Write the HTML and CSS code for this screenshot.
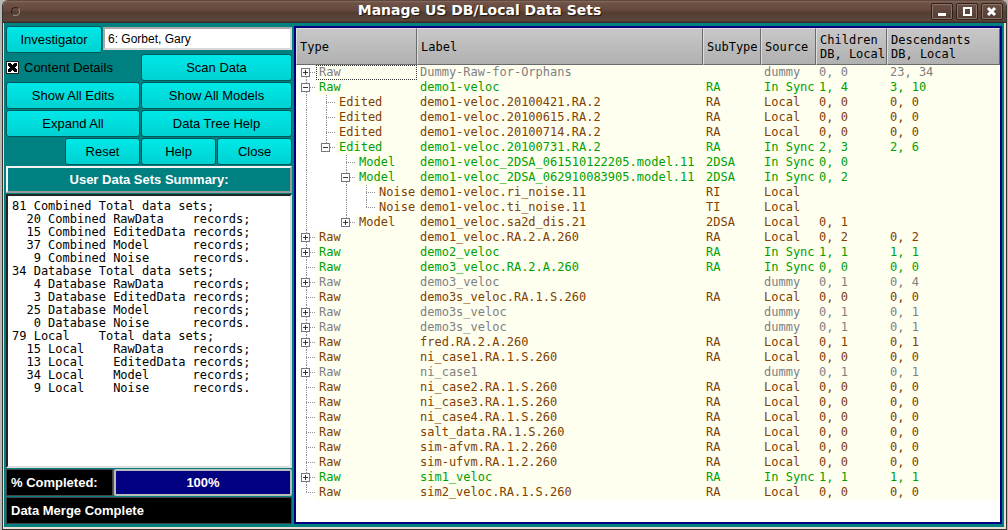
FILE: index.html
```html
<!DOCTYPE html>
<html lang="en">
<head>
<meta charset="utf-8">
<title>Manage US DB/Local Data Sets</title>
<link rel="stylesheet" href="styles.css">
</head>
<body>
<div class="window">
  <header class="titlebar">
    <span class="dot"></span>
    <h1>Manage US DB/Local Data Sets</h1>
    <div class="winbuttons">
      <button type="button" aria-label="Minimize"><svg width="20" height="15" viewBox="0 0 20 15"><path d="M6 9h8v3H6z" fill="#fff"/></svg></button>
      <button type="button" aria-label="Maximize"><svg width="20" height="15" viewBox="0 0 20 15"><path d="M7 4h7v7H7z" fill="none" stroke="#fff" stroke-width="2"/></svg></button>
      <button type="button" aria-label="Close"><svg width="20" height="15" viewBox="0 0 20 15"><path d="M6 4l7 7M13 4l-7 7" fill="none" stroke="#fff" stroke-width="3"/></svg></button>
    </div>
  </header>
  <main class="content">
    <section class="side">
      <div class="row">
        <button type="button" class="btn inv">Investigator</button>
        <input class="field" type="text" value="6: Gorbet, Gary" aria-label="Investigator">
      </div>
      <div class="grid">
        <label class="check"><input type="checkbox" checked>Content Details</label>
        <button type="button" class="btn">Scan Data</button>
        <button type="button" class="btn">Show All Edits</button>
        <button type="button" class="btn">Show All Models</button>
        <button type="button" class="btn">Expand All</button>
        <button type="button" class="btn">Data Tree Help</button>
      </div>
      <div class="row end">
        <button type="button" class="btn">Reset</button>
        <button type="button" class="btn">Help</button>
        <button type="button" class="btn">Close</button>
      </div>
      <h2 class="banner">User Data Sets Summary:</h2>
      <pre class="summary">81 Combined Total data sets;
  20 Combined RawData    records;
  15 Combined EditedData records;
  37 Combined Model      records;
   9 Combined Noise      records.
34 Database Total data sets;
   4 Database RawData    records;
   3 Database EditedData records;
  25 Database Model      records;
   0 Database Noise      records.
79 Local    Total data sets;
  15 Local    RawData    records;
  13 Local    EditedData records;
  34 Local    Model      records;
   9 Local    Noise      records.</pre>
      <div class="row">
        <span class="status pct">% Completed:</span>
        <div class="progress">100%</div>
      </div>
      <div class="status">Data Merge Complete</div>
    </section>
    <section class="tree">
      <table>
        <colgroup><col class="c1"><col class="c2"><col class="c3"><col class="c4"><col class="c5"><col></colgroup>
        <thead><tr><th>Type</th><th>Label</th><th>SubType</th><th>Source</th><th>Children<br>DB, Local</th><th>Descendants<br>DB, Local</th></tr></thead>
        <tbody>
<tr class="gray"><td><div class="node"><i class="tee first"><button type="button" class="plus" aria-label="Expand"></button></i><span class="focus">Raw</span></div></td><td>Dummy-Raw-for-Orphans</td><td></td><td>dummy</td><td>0, 0</td><td>23, 34</td></tr>
<tr class="green"><td><div class="node"><i class="tee"><button type="button" class="minus" aria-label="Collapse"></button></i><span>Raw</span></div></td><td>demo1-veloc</td><td>RA</td><td>In Sync</td><td>1, 4</td><td>3, 10</td></tr>
<tr><td><div class="node"><i class="line"></i><i class="tee"></i><span>Edited</span></div></td><td>demo1-veloc.20100421.RA.2</td><td>RA</td><td>Local</td><td>0, 0</td><td>0, 0</td></tr>
<tr><td><div class="node"><i class="line"></i><i class="tee"></i><span>Edited</span></div></td><td>demo1-veloc.20100615.RA.2</td><td>RA</td><td>Local</td><td>0, 0</td><td>0, 0</td></tr>
<tr><td><div class="node"><i class="line"></i><i class="tee"></i><span>Edited</span></div></td><td>demo1-veloc.20100714.RA.2</td><td>RA</td><td>Local</td><td>0, 0</td><td>0, 0</td></tr>
<tr class="green"><td><div class="node"><i class="line"></i><i class="tee last"><button type="button" class="minus" aria-label="Collapse"></button></i><span>Edited</span></div></td><td>demo1-veloc.20100731.RA.2</td><td>RA</td><td>In Sync</td><td>2, 3</td><td>2, 6</td></tr>
<tr class="green"><td><div class="node"><i class="line"></i><i></i><i class="tee"></i><span>Model</span></div></td><td>demo1-veloc_2DSA_061510122205.model.11</td><td>2DSA</td><td>In Sync</td><td>0, 0</td><td></td></tr>
<tr class="green"><td><div class="node"><i class="line"></i><i></i><i class="tee"><button type="button" class="minus" aria-label="Collapse"></button></i><span>Model</span></div></td><td>demo1-veloc_2DSA_062910083905.model.11</td><td>2DSA</td><td>In Sync</td><td>0, 2</td><td></td></tr>
<tr><td><div class="node"><i class="line"></i><i></i><i class="line"></i><i class="tee"></i><span>Noise</span></div></td><td>demo1-veloc.ri_noise.11</td><td>RI</td><td>Local</td><td></td><td></td></tr>
<tr><td><div class="node"><i class="line"></i><i></i><i class="line"></i><i class="tee last"></i><span>Noise</span></div></td><td>demo1-veloc.ti_noise.11</td><td>TI</td><td>Local</td><td></td><td></td></tr>
<tr><td><div class="node"><i class="line"></i><i></i><i class="tee last"><button type="button" class="plus" aria-label="Expand"></button></i><span>Model</span></div></td><td>demo1_veloc.sa2d_dis.21</td><td>2DSA</td><td>Local</td><td>0, 1</td><td></td></tr>
<tr><td><div class="node"><i class="tee"><button type="button" class="plus" aria-label="Expand"></button></i><span>Raw</span></div></td><td>demo1_veloc.RA.2.A.260</td><td>RA</td><td>Local</td><td>0, 2</td><td>0, 2</td></tr>
<tr class="green"><td><div class="node"><i class="tee"><button type="button" class="plus" aria-label="Expand"></button></i><span>Raw</span></div></td><td>demo2_veloc</td><td>RA</td><td>In Sync</td><td>1, 1</td><td>1, 1</td></tr>
<tr class="green"><td><div class="node"><i class="tee"></i><span>Raw</span></div></td><td>demo3_veloc.RA.2.A.260</td><td>RA</td><td>In Sync</td><td>0, 0</td><td>0, 0</td></tr>
<tr class="gray"><td><div class="node"><i class="tee"><button type="button" class="plus" aria-label="Expand"></button></i><span>Raw</span></div></td><td>demo3_veloc</td><td></td><td>dummy</td><td>0, 1</td><td>0, 4</td></tr>
<tr><td><div class="node"><i class="tee"></i><span>Raw</span></div></td><td>demo3s_veloc.RA.1.S.260</td><td>RA</td><td>Local</td><td>0, 0</td><td>0, 0</td></tr>
<tr class="gray"><td><div class="node"><i class="tee"><button type="button" class="plus" aria-label="Expand"></button></i><span>Raw</span></div></td><td>demo3s_veloc</td><td></td><td>dummy</td><td>0, 1</td><td>0, 1</td></tr>
<tr class="gray"><td><div class="node"><i class="tee"><button type="button" class="plus" aria-label="Expand"></button></i><span>Raw</span></div></td><td>demo3s_veloc</td><td></td><td>dummy</td><td>0, 1</td><td>0, 1</td></tr>
<tr><td><div class="node"><i class="tee"><button type="button" class="plus" aria-label="Expand"></button></i><span>Raw</span></div></td><td>fred.RA.2.A.260</td><td>RA</td><td>Local</td><td>0, 1</td><td>0, 1</td></tr>
<tr><td><div class="node"><i class="tee"></i><span>Raw</span></div></td><td>ni_case1.RA.1.S.260</td><td>RA</td><td>Local</td><td>0, 0</td><td>0, 0</td></tr>
<tr class="gray"><td><div class="node"><i class="tee"><button type="button" class="plus" aria-label="Expand"></button></i><span>Raw</span></div></td><td>ni_case1</td><td></td><td>dummy</td><td>0, 1</td><td>0, 1</td></tr>
<tr><td><div class="node"><i class="tee"></i><span>Raw</span></div></td><td>ni_case2.RA.1.S.260</td><td>RA</td><td>Local</td><td>0, 0</td><td>0, 0</td></tr>
<tr><td><div class="node"><i class="tee"></i><span>Raw</span></div></td><td>ni_case3.RA.1.S.260</td><td>RA</td><td>Local</td><td>0, 0</td><td>0, 0</td></tr>
<tr><td><div class="node"><i class="tee"></i><span>Raw</span></div></td><td>ni_case4.RA.1.S.260</td><td>RA</td><td>Local</td><td>0, 0</td><td>0, 0</td></tr>
<tr><td><div class="node"><i class="tee"></i><span>Raw</span></div></td><td>salt_data.RA.1.S.260</td><td>RA</td><td>Local</td><td>0, 0</td><td>0, 0</td></tr>
<tr><td><div class="node"><i class="tee"></i><span>Raw</span></div></td><td>sim-afvm.RA.1.2.260</td><td>RA</td><td>Local</td><td>0, 0</td><td>0, 0</td></tr>
<tr><td><div class="node"><i class="tee"></i><span>Raw</span></div></td><td>sim-ufvm.RA.1.2.260</td><td>RA</td><td>Local</td><td>0, 0</td><td>0, 0</td></tr>
<tr class="green"><td><div class="node"><i class="tee"><button type="button" class="plus" aria-label="Expand"></button></i><span>Raw</span></div></td><td>sim1_veloc</td><td>RA</td><td>In Sync</td><td>1, 1</td><td>1, 1</td></tr>
<tr><td><div class="node"><i class="tee last"></i><span>Raw</span></div></td><td>sim2_veloc.RA.1.S.260</td><td>RA</td><td>Local</td><td>0, 0</td><td>0, 0</td></tr>
        </tbody>
      </table>
    </section>
  </main>
</div>
</body>
</html>
```
FILE: styles.css
```css
* { box-sizing: border-box; }
body {
  margin: 0;
  padding: 0 1px 0 2px;
  min-height: 100vh;
  display: flex;
  background: #b8b8b8;
  font-family: "Liberation Sans", Arial, sans-serif;
  font-size: 13px;
  color: #000;
}
button { font: inherit; color: inherit; padding: 0; margin: 0; }
.window {
  flex: 1;
  display: flex;
  flex-direction: column;
  border: 1px solid #3b322c;
  border-top: 0;
  border-radius: 6px 6px 0 0;
  background: #e8e0d4;
  overflow: hidden;
}
.titlebar {
  height: 23px;
  display: flex;
  align-items: center;
  justify-content: space-between;
  padding: 0 3px 0 8px;
  background: linear-gradient(#3a2a24 0, #85695c 1px, #6f5246 3px, #64483d 11px, #533d33 12px, #5c463b 21px, #3a2b25 22px);
}
.titlebar h1 {
  margin: 0;
  flex: 1;
  align-self: flex-start;
  padding-left: 8px;
  text-align: center;
  color: #fff;
  font: bold 14px/20px "DejaVu Sans", sans-serif;
  text-shadow: 1px 1px 1px #201510;
}
.dot {
  width: 9px;
  height: 9px;
  border: 1px solid #2e1f19;
  border-right-color: #a08f86;
  border-bottom-color: #a08f86;
  border-radius: 50%;
}
.winbuttons { display: flex; gap: 3px; }
.winbuttons button {
  width: 22px;
  height: 17px;
  border: 1px solid #2f211b;
  border-radius: 2px;
  background: linear-gradient(#6b5046, #523c32);
  box-shadow: inset 0 0 0 1px #8a7368;
  display: flex;
}
.content {
  flex: 1;
  display: flex;
  gap: 2px;
  margin: 0 2px 2px 1px;
  padding: 3px 2px 3px 2px;
  background: #008080;
}
.side {
  flex: 0 0 286px;
  display: flex;
  flex-direction: column;
  gap: 1px;
}
.row { display: flex; gap: 1px; }
.end { justify-content: flex-end; }
.end .btn { width: 75px; }
.grid {
  display: grid;
  grid-template-columns: 134px 1fr;
  gap: 1px;
}
.btn {
  height: 27px;
  border: 1px solid #005858;
  border-radius: 3px;
  background: linear-gradient(#00e8e8, #00d2d2);
}
.inv { width: 96px; }
.field {
  flex: 1;
  min-width: 0;
  height: 23px;
  margin-top: 1px;
  padding: 0 3px;
  border: 2px solid #a8a8a8;
  border-right-color: #d8d8d8;
  border-bottom-color: #d8d8d8;
  background: #fff;
  color: #000;
  font: 12px "Liberation Sans", Arial, sans-serif;
}
.check { display: flex; align-items: center; gap: 5px; }
.check input {
  appearance: none;
  width: 13px;
  height: 13px;
  margin: 0;
  border: 1px solid #222;
  background:
    linear-gradient(45deg, transparent 38%, #000 38% 62%, transparent 62%) center / 9px 9px no-repeat,
    linear-gradient(-45deg, transparent 38%, #000 38% 62%, transparent 62%) center / 9px 9px no-repeat,
    #fff;
}
.banner {
  margin: 0;
  height: 27px;
  border: 2px solid #f4f4f4;
  border-right-color: #999;
  border-bottom-color: #999;
  color: #fff;
  font: bold 13px/24px "Liberation Sans", Arial, sans-serif;
  text-align: center;
}
.summary {
  flex: 1;
  margin: 0;
  padding: 4px;
  border: 2px solid #000;
  border-color: #222 #ddd #ddd #222;
  background: #fff;
  font: 12px/13px "DejaVu Sans Mono", monospace;
}
.status {
  height: 27px;
  padding-left: 4px;
  border: 1px solid #444;
  background: #000;
  color: #fff;
  font: bold 13px/25px "Liberation Sans", Arial, sans-serif;
}
.pct { width: 107px; }
.progress {
  flex: 1;
  border: 2px solid #bbb;
  border-radius: 2px;
  background: #000080;
  color: #fff;
  font: bold 13px/23px "Liberation Sans", Arial, sans-serif;
  text-align: center;
}
.tree {
  flex: 1;
  min-width: 0;
  border: 2px solid #000080;
  background: #fff;
}
table {
  width: 100%;
  table-layout: fixed;
  border-collapse: separate;
  border-spacing: 0;
  font: 12px/15px "DejaVu Sans Mono", monospace;
}
.c1 { width: 121px; }
.c2 { width: 286px; }
.c3 { width: 58px; }
.c4 { width: 55px; }
.c5 { width: 71px; }
th {
  height: 37px;
  padding: 0 0 0 3px;
  border: 1px solid #6b6b6b;
  border-left-color: #ddd;
  border-top-color: #ddd;
  background: linear-gradient(#c8c8c8, #b0b0b0);
  font-weight: normal;
  line-height: 14px;
  text-align: left;
  white-space: nowrap;
}
td {
  height: 15px;
  padding: 0 0 0 3px;
  background: #fffff0;
  color: #804000;
  white-space: nowrap;
}
td:first-child { padding: 0; background: #fff; }
.green td { color: #00a000; }
.gray td { color: #808080; }
.node { display: flex; height: 15px; }
.node span { flex: 1; padding-left: 3px; background: #fffff0; }
.node .focus { outline: 1px dotted #333; outline-offset: -1px; }
.node i {
  flex: 0 0 20px;
  display: flex;
  align-items: center;
  padding-left: 5px;
  background-repeat: no-repeat;
}
.line {
  background-image: repeating-linear-gradient(#909090 0 1px, transparent 1px 2px);
  background-size: 1px 100%;
  background-position: 10px 0;
}
.tee {
  background-image:
    repeating-linear-gradient(#909090 0 1px, transparent 1px 2px),
    repeating-linear-gradient(90deg, #909090 0 1px, transparent 1px 2px);
  background-size: 1px 15px, 10px 1px;
  background-position: 10px 0, 10px 7px;
}
.node .last { background-size: 1px 8px, 10px 1px; }
.node .first { background-position: 10px 8px, 10px 7px; }
.plus, .minus {
  width: 9px;
  height: 9px;
  border: 1px solid #777;
  background: linear-gradient(#333, #333) center / 5px 1px no-repeat, #fff;
}
.plus {
  background:
    linear-gradient(#333, #333) center / 5px 1px no-repeat,
    linear-gradient(#333, #333) center / 1px 5px no-repeat,
    #fff;
}
```
